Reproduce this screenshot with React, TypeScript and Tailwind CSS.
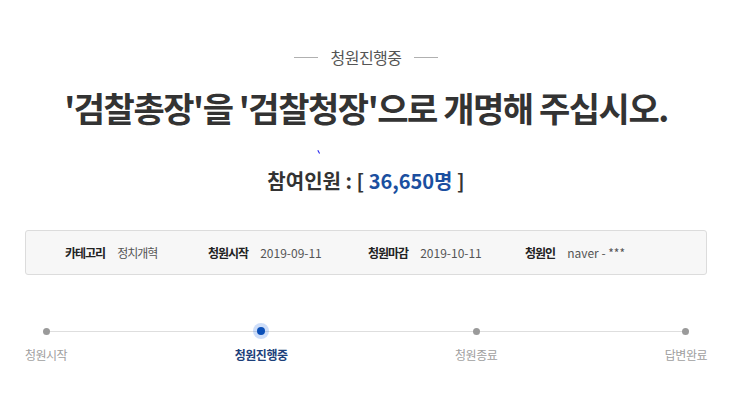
import React from "react";

type Step = { label: string; active?: boolean };

const STEPS: Step[] = [
  { label: "청원시작" },
  { label: "청원진행중", active: true },
  { label: "청원종료" },
  { label: "답변완료" },
];

const INFO = [
  { label: "카테고리", value: "정치개혁", korean: true, width: "w-[143px]" },
  { label: "청원시작", value: "2019-09-11", width: "w-[160px]" },
  { label: "청원마감", value: "2019-10-11", width: "w-[157px]" },
  { label: "청원인", value: "naver - ***", width: "" },
];

function ProgressSteps() {
  return (
    <div className="relative mt-[48px] flex justify-between">
      {/* track behind the dots */}
      <div className="absolute left-[22px] right-[22px] top-[8px] h-px bg-[#dedede]" />
      {STEPS.map((step) => (
        <div key={step.label} className="relative flex flex-col items-center">
          <div className="flex h-[16px] w-[16px] items-center justify-center">
            {step.active ? (
              <span className="flex h-[16px] w-[16px] items-center justify-center rounded-full bg-[#0a5ce0]/20">
                <span className="h-[8px] w-[8px] rounded-full bg-[#0a4fb8]" />
              </span>
            ) : (
              <span className="h-[7px] w-[7px] rounded-full bg-[#9a9a9a]" />
            )}
          </div>
          <span
            className={`mt-[7px] text-[12px] leading-[18px] tracking-[-0.5px] ${
              step.active ? "font-bold text-[#1d3f7a]" : "text-[#a0a0a0]"
            }`}
          >
            {step.label}
          </span>
        </div>
      ))}
    </div>
  );
}

export default function App() {
  return (
    <div className="min-h-[408px] w-[730px] bg-white font-['Noto_Sans_CJK_KR','Noto_Sans',sans-serif]">
      <div className="pt-[47px] pl-[25px] pr-[23px]">
        <div className="flex h-[20px] items-center justify-center gap-[12px]">
          <span className="h-px w-[24px] bg-[#b0b0b0]" />
          <span className="text-[16px] leading-[20px] tracking-[-0.5px] text-[#555]">청원진행중</span>
          <span className="h-px w-[24px] bg-[#b0b0b0]" />
        </div>

        <h1 className="mt-[21px] text-center text-[34px] font-bold leading-[40px] tracking-[-1.45px] text-[#333]">
          '검찰총장'을 '검찰청장'으로 개명해 주십시오.
        </h1>

        <div className="mt-[22px] h-[4px] pl-[292px]">
          <svg width="4" height="4" viewBox="0 0 4 4" className="block">
            <path d="M0.8 0.3 L2.6 3.6" stroke="#2a2af0" strokeWidth="1.1" fill="none" />
          </svg>
        </div>

        <div className="mt-[13px] text-center text-[20px] font-bold leading-[28px] text-[#333]">
          참여인원 : [ <span className="text-[#1b4fa0]">36,650명</span> ]
        </div>

        <div className="mt-[35px] flex h-[45px] items-center rounded-[3px] border border-[#dcdcdc] bg-[#f7f7f7] pl-[39px] text-[12px]">
          {INFO.map((item) => (
            <div key={item.label} className={`flex items-center ${item.width}`}>
              <span className="font-bold tracking-[-1px] text-[#222]">{item.label}</span>
              <span className={`ml-[12px] text-[#555] ${item.korean ? "tracking-[-1px]" : ""}`}>
                {item.value}
              </span>
            </div>
          ))}
        </div>

        <ProgressSteps />
      </div>
    </div>
  );
}
